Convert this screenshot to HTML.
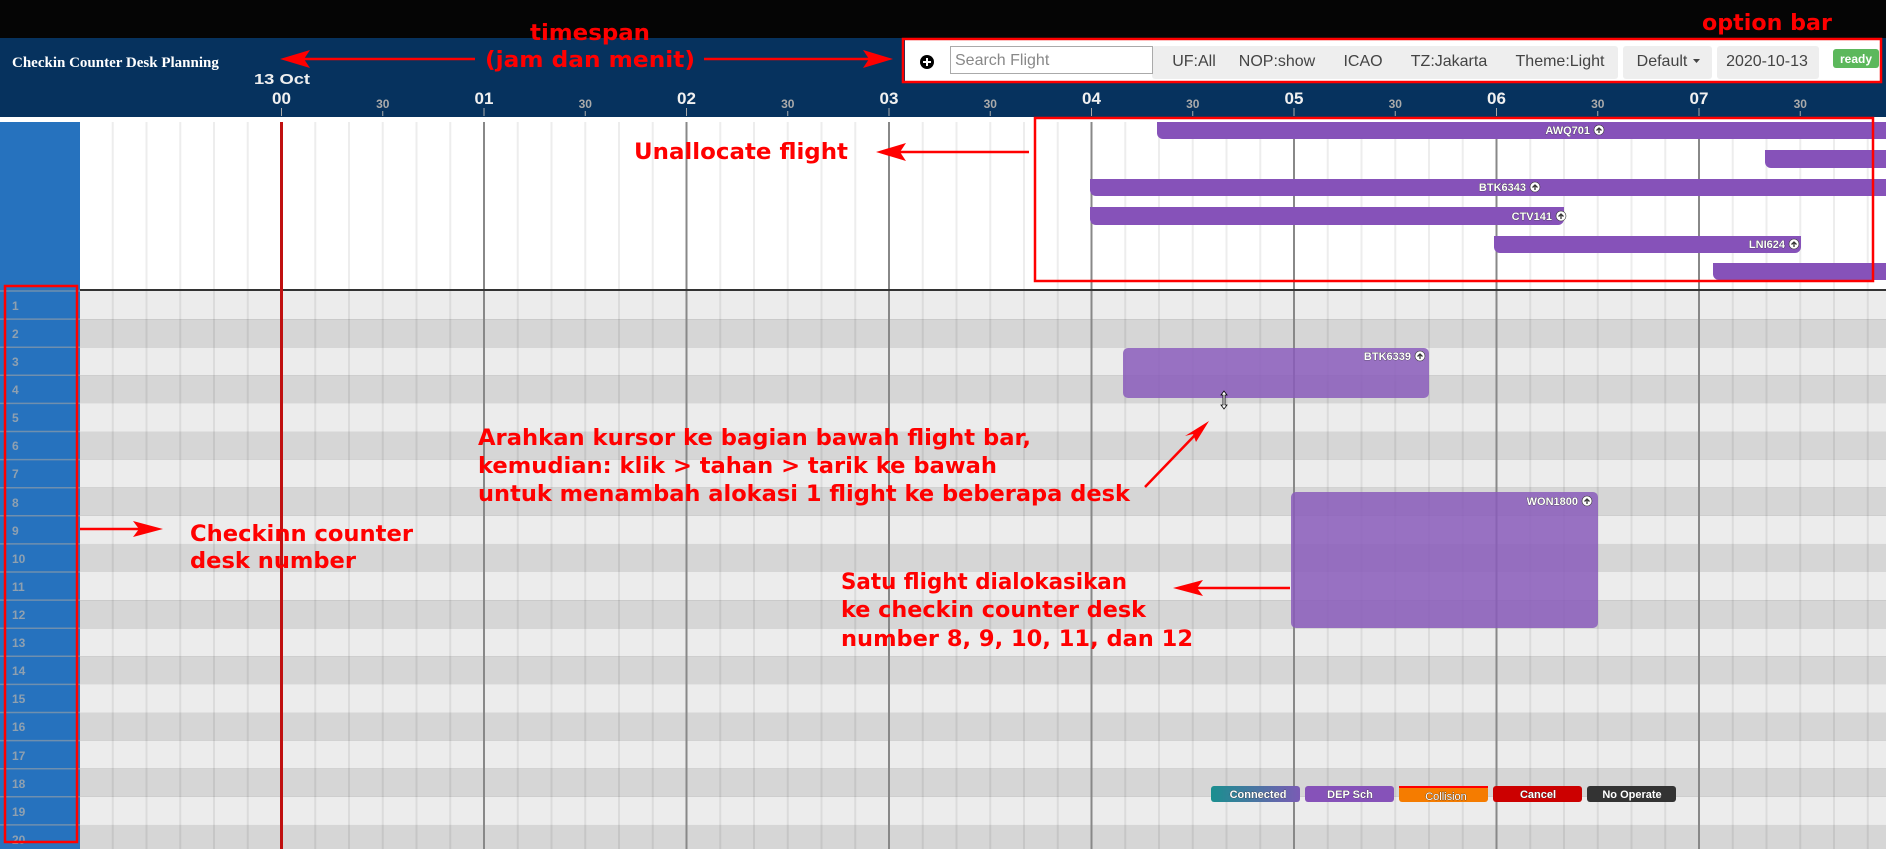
<!DOCTYPE html>
<html><head><meta charset="utf-8"><style>
html,body{margin:0;padding:0;background:#000;width:1886px;height:849px;overflow:hidden}
svg{display:block}
.ann{font-family:"DejaVu Sans","Liberation Sans",sans-serif;font-weight:bold;fill:#ff0000}
.lbl{font-family:"Liberation Sans",sans-serif;font-weight:bold;font-size:11px;fill:#fff;stroke:#333;stroke-width:0.6;paint-order:stroke}
</style></head><body>
<svg id="s" width="1886" height="849" xmlns="http://www.w3.org/2000/svg">
<rect x="0" y="0" width="1886" height="38" fill="#050505"/>
<rect x="0" y="38" width="1886" height="79" fill="#06325e"/>
<rect x="0" y="117" width="1886" height="5" fill="#fff"/>
<rect x="0" y="122" width="1886" height="168" fill="#fff"/>
<g id="rows"></g>
<g id="grid"></g>
<rect x="0" y="122" width="80" height="727" fill="#2672be"/>
<g id="lsep"></g>
<line x1="80" y1="290" x2="1886" y2="290" stroke="#333" stroke-width="2"/>
<g font-family="Liberation Sans,sans-serif" font-weight="bold" font-size="12" fill="#8fa0b0">
<text x="12" y="310">1</text><text x="12" y="338">2</text><text x="12" y="366">3</text><text x="12" y="394">4</text><text x="12" y="422">5</text><text x="12" y="450">6</text><text x="12" y="478">7</text><text x="12" y="507">8</text><text x="12" y="535">9</text><text x="12" y="563">10</text><text x="12" y="591">11</text><text x="12" y="619">12</text><text x="12" y="647">13</text><text x="12" y="675">14</text><text x="12" y="703">15</text><text x="12" y="731">16</text><text x="12" y="760">17</text><text x="12" y="788">18</text><text x="12" y="816">19</text><text x="12" y="844">20</text>
</g>
<rect x="280" y="122" width="3" height="727" fill="#c01010"/>
<!-- header -->
<text x="12" y="67" font-family="Liberation Serif,serif" font-weight="bold" font-size="15" fill="#fff">Checkin Counter Desk Planning</text>
<text x="254" y="84" font-family="Liberation Sans,sans-serif" font-weight="bold" font-size="15" fill="#eee" textLength="56" lengthAdjust="spacingAndGlyphs">13 Oct</text>
<g id="hdr" font-family="Liberation Sans,sans-serif" font-weight="bold" text-anchor="middle"></g>
<!-- option bar -->
<rect x="905" y="39" width="976" height="43" fill="#fff"/>
<rect x="1152" y="46" width="466" height="33" rx="3" fill="#eeeeee"/>
<rect x="1623" y="46" width="89" height="33" rx="3" fill="#eeeeee"/>
<rect x="1717" y="46" width="102" height="33" rx="3" fill="#eeeeee"/>
<circle cx="927" cy="62" r="7" fill="#000"/>
<path d="M927 58v8M923 62h8" stroke="#fff" stroke-width="2"/>
<rect x="950.5" y="46.5" width="202" height="27" fill="#fff" stroke="#aaa"/>
<g font-family="Liberation Sans,sans-serif" font-size="16" fill="#444">
<text x="955" y="65" fill="#888">Search Flight</text>
<text x="1194" y="66" text-anchor="middle">UF:All</text>
<text x="1277" y="66" text-anchor="middle">NOP:show</text>
<text x="1363" y="66" text-anchor="middle">ICAO</text>
<text x="1449" y="66" text-anchor="middle">TZ:Jakarta</text>
<text x="1560" y="66" text-anchor="middle">Theme:Light</text>
<text x="1662" y="66" text-anchor="middle">Default</text>
<text x="1767" y="66" text-anchor="middle">2020-10-13</text>
</g>
<path d="M1693 59h7l-3.5 4z" fill="#444"/>
<rect x="1833" y="49" width="46" height="19" rx="3" fill="#5cb85c"/>
<text x="1856" y="63" text-anchor="middle" font-family="Liberation Sans,sans-serif" font-weight="bold" font-size="12" fill="#fff">ready</text>
<!-- unallocated bars -->
<g fill="#8652b9" stroke="none">
<path d="M1157 122h729v17h-723a6 6 0 0 1-6-6z"/>
<path d="M1765 150h121v18h-115a6 6 0 0 1-6-6z"/>
<path d="M1090 179h796v17h-790a6 6 0 0 1-6-6z"/>
<path d="M1090 207h474v12a6 6 0 0 1-6 6h-462a6 6 0 0 1-6-6z"/>
<path d="M1494 236h307v11a6 6 0 0 1-6 6h-295a6 6 0 0 1-6-6z"/>
<path d="M1713 263h173v17h-167a6 6 0 0 1-6-6z"/>
</g>
<g fill="#8a5cbb" opacity="0.85">
<rect x="1123" y="348" width="306" height="50" rx="5"/>
<rect x="1291" y="492" width="307" height="136" rx="5"/>
</g>
<g class="lbl">
<text x="1590" y="134" text-anchor="end">AWQ701</text>
<text x="1526" y="191" text-anchor="end">BTK6343</text>
<text x="1552" y="220" text-anchor="end">CTV141</text>
<text x="1785" y="248" text-anchor="end">LNI624</text>
<text x="1411" y="360" text-anchor="end">BTK6339</text>
<text x="1578" y="505" text-anchor="end">WON1800</text>
</g>
<g id="icons"></g>
<!-- cursor -->
<path d="M1224 391l-3 4h2v10h-2l3 4 3-4h-2v-10h2z" fill="#fff" stroke="#000" stroke-width="0.8"/>
<!-- legend -->
<defs><linearGradient id="cg" x1="0" x2="1"><stop offset="0" stop-color="#1a8f8f"/><stop offset="1" stop-color="#7a5bb5"/></linearGradient></defs>
<rect x="1211" y="786" width="89" height="16" rx="3" fill="url(#cg)"/>
<rect x="1305" y="786" width="89" height="16" rx="3" fill="#8652b9"/>
<rect x="1399" y="786" width="89" height="16" rx="3" fill="#f57c00"/>
<rect x="1399" y="786" width="89" height="2" fill="#f00"/>
<rect x="1493" y="786" width="89" height="16" rx="3" fill="#cc0000"/>
<rect x="1587" y="786" width="89" height="16" rx="3" fill="#333"/>
<g class="lbl" text-anchor="middle">
<text x="1258" y="798">Connected</text><text x="1350" y="798">DEP Sch</text><text x="1446" y="800" font-weight="normal">Collision</text><text x="1538" y="798">Cancel</text><text x="1632" y="798">No Operate</text>
</g>
<!-- annotations -->
<g fill="none" stroke="#ff0000" stroke-width="2.5">
<rect x="903" y="39" width="978" height="43"/>
<rect x="1035" y="118" width="838" height="163"/>
<rect x="5" y="286" width="72" height="556"/>
<line x1="475" y1="59" x2="300" y2="59"/><line x1="704" y1="59" x2="873" y2="59"/>
<line x1="1029" y1="152" x2="895" y2="152"/>
<line x1="80" y1="529" x2="143" y2="529"/>
<line x1="1145" y1="487" x2="1196" y2="434"/>
<line x1="1290" y1="588" x2="1193" y2="588"/>
</g>
<g fill="#ff0000">
<path d="M280 59l30-9-6 9 6 9z"/><path d="M893 59l-30-9 6 9-6 9z"/>
<path d="M876 152l30-9-6 9 6 9z"/>
<path d="M163 529l-30-8 6 8-6 8z"/>
<path d="M1209 421l-24 15 8-2 3 8z"/>
<path d="M1173 588l30-8-6 8 6 8z"/>
</g>
<g class="ann" font-size="22">
<text x="530" y="40" textLength="120" lengthAdjust="spacingAndGlyphs">timespan</text>
<text x="485" y="67" textLength="210" lengthAdjust="spacingAndGlyphs">(jam dan menit)</text>
<text x="1702" y="30" textLength="130" lengthAdjust="spacingAndGlyphs">option bar</text>
<text x="634" y="159" textLength="214" lengthAdjust="spacingAndGlyphs">Unallocate flight</text>
<text x="190" y="541" textLength="223" lengthAdjust="spacingAndGlyphs">Checkinn counter</text>
<text x="190" y="568" textLength="166" lengthAdjust="spacingAndGlyphs">desk number</text>
<text x="478" y="445" textLength="553" lengthAdjust="spacingAndGlyphs">Arahkan kursor ke bagian bawah flight bar,</text>
<text x="478" y="473" textLength="519" lengthAdjust="spacingAndGlyphs">kemudian: klik &gt; tahan &gt; tarik ke bawah</text>
<text x="478" y="501" textLength="652" lengthAdjust="spacingAndGlyphs">untuk menambah alokasi 1 flight ke beberapa desk</text>
<text x="841" y="589" textLength="286" lengthAdjust="spacingAndGlyphs">Satu flight dialokasikan</text>
<text x="841" y="617" textLength="305" lengthAdjust="spacingAndGlyphs">ke checkin counter desk</text>
<text x="841" y="646" textLength="352" lengthAdjust="spacingAndGlyphs">number 8, 9, 10, 11, dan 12</text>
</g>
</svg>
<script>
var NS="http://www.w3.org/2000/svg";
function el(p,t,a){var e=document.createElementNS(NS,t);for(var k in a)e.setAttribute(k,a[k]);p.appendChild(e);return e;}
var rows=document.getElementById('rows'),grid=document.getElementById('grid'),ls=document.getElementById('lsep'),hdr=document.getElementById('hdr'),ic=document.getElementById('icons');
for(var i=0;i<20;i++){var y=291+28.1*i;el(rows,'rect',{x:80,y:y,width:1806,height:28.2,fill:i%2?'#d6d6d6':'#ececec'});el(ls,'line',{x1:0,x2:80,y1:y,y2:y,stroke:'#6f8fae','stroke-width':1.5});}
for(var k=0;k<55;k++){var x=79+33.75*k;if(x<80)continue;var hr=((k-6)%6===0)&&k>=6;
 el(grid,'line',{x1:x,x2:x,y1:122,y2:849,stroke:hr?'#888':'rgba(0,0,0,0.07)','stroke-width':hr?2:2});}
var h=['00','01','02','03','04','05','06','07'];
for(var j=0;j<8;j++){var x=281.5+202.5*j;var t=el(hdr,'text',{x:x,y:104,'font-size':17,fill:'#f0f0f0'});t.textContent=h[j];
 el(hdr,'line',{x1:x,x2:x,y1:108,y2:116,stroke:'#aaa'});
 var x2=x+101.25;var t2=el(hdr,'text',{x:x2,y:108,'font-size':12,fill:'#aaa'});t2.textContent='30';el(hdr,'line',{x1:x2,x2:x2,y1:111,y2:116,stroke:'#aaa'});}
[[1599,130],[1535,187],[1561,216],[1794,244],[1420,356],[1587,501]].forEach(function(p){el(ic,'circle',{cx:p[0],cy:p[1],r:5,fill:'#fff',stroke:'#333','stroke-width':0.6});el(ic,'path',{d:'M'+p[0]+' '+(p[1]+3)+'v-5m-2.5 2.5l2.5-2.5 2.5 2.5',stroke:'#333','stroke-width':1.3,fill:'none'});});
</script>
</body></html>
